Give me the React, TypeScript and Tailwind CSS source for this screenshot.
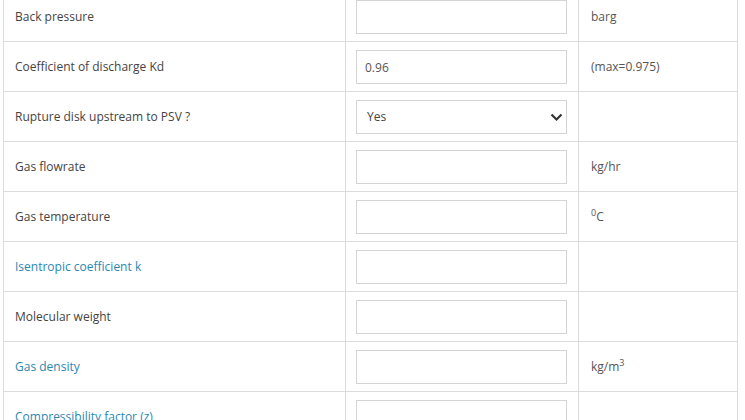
import React from 'react'

type Row = {
  label: string
  link?: boolean
  kind: 'input' | 'select'
  value?: string
  unit?: React.ReactNode
}

const ROWS: Row[] = [
  { label: 'Back pressure', kind: 'input', unit: 'barg' },
  { label: 'Coefficient of discharge Kd', kind: 'input', value: '0.96', unit: '(max=0.975)' },
  { label: 'Rupture disk upstream to PSV ?', kind: 'select', value: 'Yes' },
  { label: 'Gas flowrate', kind: 'input', unit: 'kg/hr' },
  {
    label: 'Gas temperature',
    kind: 'input',
    unit: (
      <>
        <sup className="text-[9px]">0</sup>C
      </>
    ),
  },
  { label: 'Isentropic coefficient k', link: true, kind: 'input' },
  { label: 'Molecular weight', kind: 'input' },
  {
    label: 'Gas density',
    link: true,
    kind: 'input',
    unit: (
      <>
        kg/m<sup className="text-[9px]">3</sup>
      </>
    ),
  },
  { label: 'Compressibility factor (z)', link: true, kind: 'input' },
]

function Chevron() {
  return (
    <svg width="13" height="9" viewBox="0 0 13 9" className="shrink-0">
      <path d="M1.5 1.5 L6.5 6.5 L11.5 1.5" fill="none" stroke="#333" strokeWidth="2.2" />
    </svg>
  )
}

export default function App() {
  return (
    <div className="w-[745px] h-[420px] overflow-hidden bg-white font-['Open_Sans',sans-serif] text-[12px] text-[#555]">
      <div className="ml-[3px] -mt-[8px] w-[735px] border-x border-[#dcdcdc]">
        {ROWS.map((r) => (
          <div key={r.label} className="flex h-[50px] border-b border-[#dcdcdc]">
            <div className="w-[341px] flex items-center pl-[11px]">
              <span className={r.link ? 'text-[#2a87b3]' : 'text-[#444]'}>{r.label}</span>
            </div>
            <div className="w-[233px] border-l border-[#dcdcdc] pl-[10px] pt-[8px]">
              {r.kind === 'select' ? (
                <div className="w-[211px] h-[34px] border border-[#d4d4d4] flex items-center justify-between pl-[10px] pr-[2px] text-[#444]">
                  <span>{r.value}</span>
                  <span className="mr-[1px]"><Chevron /></span>
                </div>
              ) : (
                <input
                  type="text"
                  defaultValue={r.value ?? ''}
                  className="w-[211px] h-[34px] border border-[#d4d4d4] px-[8px] text-[12px] text-[#555] outline-none"
                />
              )}
            </div>
            <div className="w-[159px] border-l border-[#dcdcdc] flex items-center pl-[12px]">
              <span>{r.unit}</span>
            </div>
          </div>
        ))}
      </div>
    </div>
  )
}
